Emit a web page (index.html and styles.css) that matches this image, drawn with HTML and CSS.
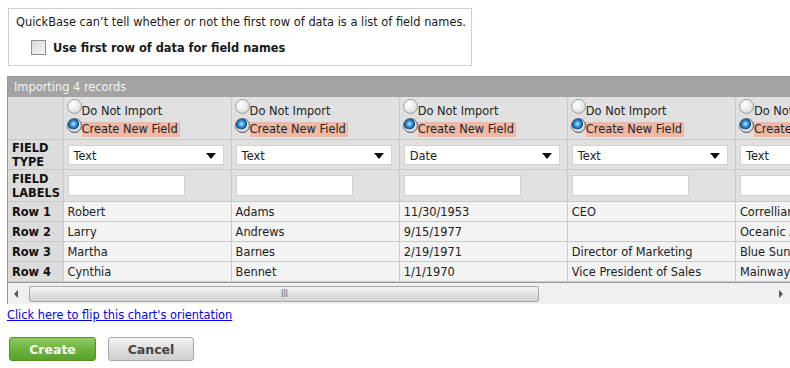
FILE: index.html
```html
<!DOCTYPE html>
<html lang="en">

<head>
    <meta charset="UTF-8">
    <title>Import Data</title>
    <link rel="stylesheet" href="styles.css">
</head>

<body>
    <div class="notice">
        <p class="notice-text">QuickBase can’t tell whether or not the first row of data is a list of field names.</p>
        <label class="notice-check">
            <span class="checkbox"></span>
            <span>Use first row of data for field names</span>
        </label>
    </div>

    <div class="grid">
        <div class="grid-title">Importing 4 records</div>
        <div class="grid-body">
            <table class="import-table">
                <colgroup>
                    <col class="col-label">
                    <col class="col-field">
                    <col class="col-field">
                    <col class="col-field">
                    <col class="col-field">
                    <col class="col-field">
                </colgroup>
                <tr class="row-choice">
                    <th></th>
                    <td><div class="choice"><span class="radio"></span>Do Not Import</div><div class="choice"><span class="radio checked"></span><span class="hl">Create New Field</span></div></td>
                    <td><div class="choice"><span class="radio"></span>Do Not Import</div><div class="choice"><span class="radio checked"></span><span class="hl">Create New Field</span></div></td>
                    <td><div class="choice"><span class="radio"></span>Do Not Import</div><div class="choice"><span class="radio checked"></span><span class="hl">Create New Field</span></div></td>
                    <td><div class="choice"><span class="radio"></span>Do Not Import</div><div class="choice"><span class="radio checked"></span><span class="hl">Create New Field</span></div></td>
                    <td><div class="choice"><span class="radio"></span>Do Not Import</div><div class="choice"><span class="radio checked"></span><span class="hl">Create New Field</span></div></td>
                </tr>
                <tr class="row-type">
                    <th>FIELD<br>TYPE</th>
                    <td><div class="select">Text</div></td>
                    <td><div class="select">Text</div></td>
                    <td><div class="select">Date</div></td>
                    <td><div class="select">Text</div></td>
                    <td><div class="select">Text</div></td>
                </tr>
                <tr class="row-labels">
                    <th>FIELD<br>LABELS</th>
                    <td><div class="text-input"></div></td>
                    <td><div class="text-input"></div></td>
                    <td><div class="text-input"></div></td>
                    <td><div class="text-input"></div></td>
                    <td><div class="text-input"></div></td>
                </tr>
                <tr class="row-data">
                    <th>Row 1</th>
                    <td>Robert</td>
                    <td>Adams</td>
                    <td>11/30/1953</td>
                    <td>CEO</td>
                    <td>Correllian Industries</td>
                </tr>
                <tr class="row-data">
                    <th>Row 2</th>
                    <td>Larry</td>
                    <td>Andrews</td>
                    <td>9/15/1977</td>
                    <td></td>
                    <td>Oceanic Airlines</td>
                </tr>
                <tr class="row-data">
                    <th>Row 3</th>
                    <td>Martha</td>
                    <td>Barnes</td>
                    <td>2/19/1971</td>
                    <td>Director of Marketing</td>
                    <td>Blue Sun Corporation</td>
                </tr>
                <tr class="row-data">
                    <th>Row 4</th>
                    <td>Cynthia</td>
                    <td>Bennet</td>
                    <td>1/1/1970</td>
                    <td>Vice President of Sales</td>
                    <td>Mainway Toys</td>
                </tr>
            </table>
        </div>
        <!-- horizontal scroller -->
        <div class="hscroll">
            <span class="arrow arrow-left"></span>
            <div class="track">
                <div class="thumb"><span class="grip">III</span></div>
            </div>
            <span class="arrow arrow-right"></span>
        </div>
    </div>

    <a class="flip-link" href="#">Click here to flip this chart's orientation</a>

    <div class="actions">
        <button class="btn btn-create">Create</button>
        <button class="btn btn-cancel">Cancel</button>
    </div>
</body>

</html>
```

FILE: styles.css
```css
body {
    font-family: "DejaVu Sans", Verdana, sans-serif;
    font-size: 11.4px;
    color: #1a1a1a;
    margin: 0;
    padding: 8px 0 0 7px;
    background-color: #fff;
    overflow: hidden;
}

.notice {
    width: 462px;
    height: 56px;
    margin-left: 1px;
    border: 1px solid #cfcfcf;
    box-sizing: content-box;
}

.notice-text {
    margin: 0;
    padding: 5px 0 0 7px;
    line-height: 16px;
    white-space: nowrap;
}

.notice-check {
    display: flex;
    align-items: center;
    margin: 10px 0 0 22px;
    font-weight: bold;
}

.checkbox {
    width: 13px;
    height: 13px;
    border: 1px solid #8f8f8f;
    background: linear-gradient(135deg, #d8d8d8, #f6f6f6);
    margin-right: 7px;
}

.grid {
    margin-top: 10px;
    width: 783px;
    border-left: 1px solid #9a9a9a;
    border-top: 1px solid #9a9a9a;
    background-color: #f2f2f2;
}

.grid-title {
    height: 20px;
    line-height: 21px;
    padding-left: 6px;
    background-color: #a3a3a3;
    color: #f4f4f4;
}

.grid-body {
    overflow: hidden;
    border-bottom: 1px solid #9a9a9a;
}

.import-table {
    table-layout: fixed;
    border-collapse: collapse;
    width: 896px;
}

.col-label {
    width: 55px;
}

.col-field {
    width: 168px;
}

.import-table th,
.import-table td {
    border: 1px solid #c9c9c9;
    padding: 0 4px;
    text-align: left;
    vertical-align: middle;
    white-space: nowrap;
    overflow: hidden;
}

.import-table tr:first-child th,
.import-table tr:first-child td {
    border-top: none;
}

.import-table th {
    border-left: none;
    background-color: #dcdcdc;
    font-weight: bold;
    line-height: 14px;
    color: #111;
}

.row-choice td,
.row-type td,
.row-labels td {
    background-color: #e0e0e0;
}

.row-choice td {
    height: 40px;
    padding: 2px 3px 0;
    vertical-align: top;
}

.choice {
    display: flex;
    align-items: flex-end;
    height: 19px;
    color: #222;
}

.choice .radio {
    margin-bottom: 4px;
}

.hl {
    background-color: #f0b9a6;
    padding-right: 2px;
    line-height: 15px;
}

.radio {
    width: 13px;
    height: 13px;
    border-radius: 50%;
    border: 1px solid #9c9c9c;
    background: radial-gradient(circle at 40% 35%, #ffffff 0, #ececec 45%, #c7c7c7 100%);
    flex: none;
}

.radio.checked {
    border-color: #5c5c5c;
    background:
        radial-gradient(circle at 42% 38%, #bfe6ff 0, #2f8fd6 28%, #0a4f8a 48%, transparent 52%),
        radial-gradient(circle at 40% 35%, #ffffff 0, #e4e4e4 60%, #a9a9a9 100%);
}

.row-type td {
    height: 29px;
    padding: 0 4px;
}

.select {
    position: relative;
    height: 20px;
    line-height: 20px;
    padding-left: 5px;
    background-color: #fff;
    border: 1px solid #d2d2d2;
    box-sizing: border-box;
    width: 156px;
    color: #222;
}

.select::after {
    content: "";
    position: absolute;
    right: 7px;
    top: 7px;
    border-left: 5px solid transparent;
    border-right: 5px solid transparent;
    border-top: 6px solid #111;
}

.row-labels td {
    height: 31px;
    padding: 0 4px;
}

.text-input {
    width: 117px;
    height: 21px;
    background-color: #fff;
    border: 1px solid #d0d0d0;
    box-sizing: border-box;
}

.row-data td {
    height: 19px;
    background-color: #f3f3f3;
    color: #222;
}

.row-data th {
    height: 19px;
}

.hscroll {
    display: flex;
    align-items: center;
    height: 21px;
    background-color: #f0f0f0;
}

.arrow {
    width: 0;
    height: 0;
    border-top: 4px solid transparent;
    border-bottom: 4px solid transparent;
    flex: none;
}

.arrow-left {
    border-right: 4px solid #555;
    margin: 0 0 0 6px;
}

.arrow-right {
    border-left: 4px solid #555;
    margin: 0 8px 0 0;
}

.track {
    flex: 1;
    margin-left: 11px;
    margin-right: 11px;
}

.thumb {
    width: 510px;
    height: 16px;
    border: 1px solid #a8a8a8;
    border-radius: 2px;
    background: linear-gradient(#f4f4f4, #e2e2e2 50%, #d3d3d3);
    box-sizing: border-box;
    display: flex;
    justify-content: center;
    align-items: center;
}

.grip {
    font-size: 10px;
    color: #6a6a6a;
    transform: scaleX(0.8);
}

.flip-link {
    display: inline-block;
    margin-top: 4px;
    color: #0000ee;
}

.actions {
    display: flex;
    gap: 12px;
    margin-top: 15px;
    margin-left: 2px;
}

.btn {
    font-family: "DejaVu Sans", Verdana, sans-serif;
    font-size: 12.5px;
    font-weight: bold;
    height: 24px;
    border-radius: 3px;
    padding: 0;
    cursor: pointer;
}

.btn-create {
    width: 87px;
    color: #f4fbef;
    border: 1px solid #4f9324;
    background: linear-gradient(#8fcb62, #6fb43f 50%, #5ba02c);
}

.btn-cancel {
    width: 86px;
    color: #444;
    border: 1px solid #a8a8a8;
    background: linear-gradient(#f4f4f4, #dedede 50%, #cfcfcf);
}
```
